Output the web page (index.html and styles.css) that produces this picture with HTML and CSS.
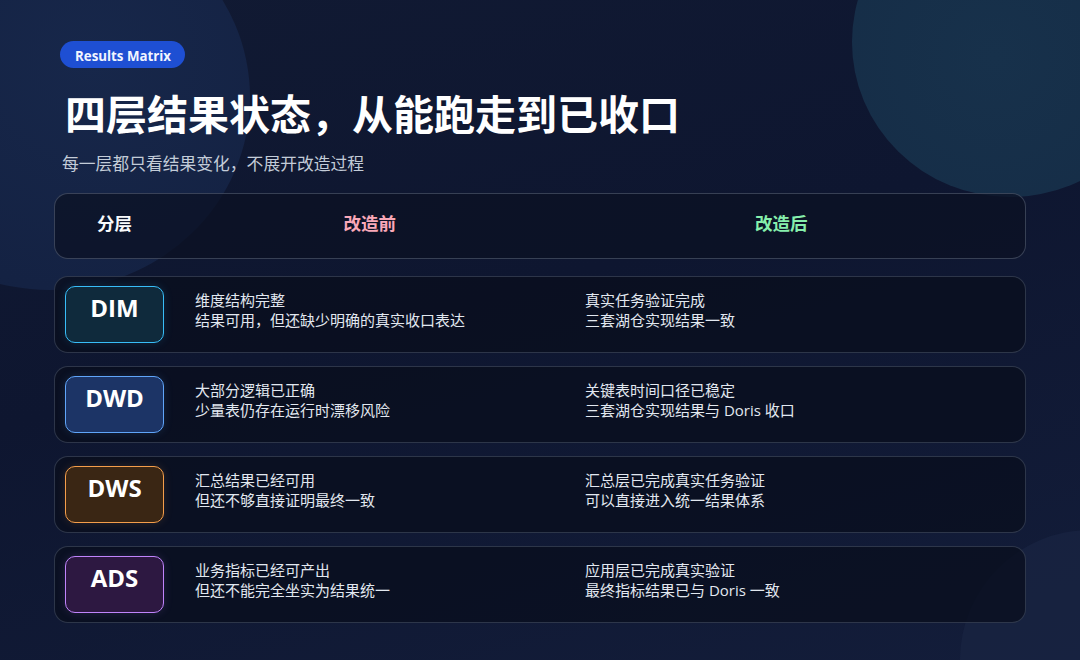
FILE: index.html
```html
<!DOCTYPE html>
<html lang="zh-CN">
<head>
<meta charset="utf-8">
<link rel="stylesheet" href="styles.css">
</head>
<body>
<div class="slide">
  <div class="blob blob-left"></div>
  <div class="blob blob-right"></div>
  <div class="blob blob-bottom"></div>
  <div class="content">
    <div class="pill">Results Matrix</div>
    <h1 class="title">四层结果状态，从能跑走到已收口</h1>
    <p class="subtitle">每一层都只看结果变化，不展开改造过程</p>

    <div class="head-row">
      <div class="h-layer">分层</div>
      <div class="h-before">改造前</div>
      <div class="h-after">改造后</div>
    </div>

    <div class="rows">
      <div class="row">
        <div class="badge badge-dim">DIM</div>
        <div class="cell">维度结构完整<br>结果可用，但还缺少明确的真实收口表达</div>
        <div class="cell">真实任务验证完成<br>三套湖仓实现结果一致</div>
      </div>
      <div class="row">
        <div class="badge badge-dwd">DWD</div>
        <div class="cell">大部分逻辑已正确<br>少量表仍存在运行时漂移风险</div>
        <div class="cell">关键表时间口径已稳定<br>三套湖仓实现结果与 Doris 收口</div>
      </div>
      <div class="row">
        <div class="badge badge-dws">DWS</div>
        <div class="cell">汇总结果已经可用<br>但还不够直接证明最终一致</div>
        <div class="cell">汇总层已完成真实任务验证<br>可以直接进入统一结果体系</div>
      </div>
      <div class="row">
        <div class="badge badge-ads">ADS</div>
        <div class="cell">业务指标已经可产出<br>但还不能完全坐实为结果统一</div>
        <div class="cell">应用层已完成真实验证<br>最终指标结果已与 Doris 一致</div>
      </div>
    </div>
  </div>
</div>
</body>
</html>
```

FILE: styles.css
```css
* { box-sizing: border-box; }
html, body { margin: 0; padding: 0; }
body {
  width: 1080px;
  height: 660px;
  overflow: hidden;
  font-family: "Open Sans", "Noto Sans CJK SC", sans-serif;
  background: #0f172d;
}
.slide {
  position: relative;
  width: 1080px;
  height: 660px;
  overflow: hidden;
  background: linear-gradient(165deg, #111a33 0%, #0e1630 45%, #131d3a 100%);
}
.blob {
  position: absolute;
  border-radius: 50%;
}
.blob-left {
  left: -150px;
  top: -95px;
  width: 400px;
  height: 385px;
  background: radial-gradient(circle at 60% 40%, #17274a 0%, #142243 70%, #132040 100%);
}
.blob-right {
  left: 852px;
  top: -113px;
  width: 316px;
  height: 310px;
  background: radial-gradient(circle at 45% 55%, #17314b 0%, #152c46 100%);
}
.blob-bottom {
  left: 960px;
  top: 530px;
  width: 260px;
  height: 260px;
  background: #1a2745;
  opacity: 0.6;
}
.content {
  position: relative;
  padding: 41px 54px 0 54px;
}
.pill {
  display: inline-block;
  margin-left: 6px;
  height: 27px;
  line-height: 27px;
  padding: 2px 14px 0 15px;
  border-radius: 14px;
  background: #1e4fd3;
  color: #f1f5ff;
  font-size: 13.3px;
  font-weight: 700;
}
.title {
  margin: 16px 0 0 11px;
  font-family: "Noto Sans CJK SC", sans-serif;
  font-size: 41px;
  line-height: 56px;
  font-weight: 700;
  color: #ffffff;
  letter-spacing: 0;
}
.subtitle {
  margin: 12px 0 0 8px;
  font-family: "Noto Sans CJK SC", sans-serif;
  font-size: 16.8px;
  line-height: 22px;
  color: #c3ccd8;
}
.head-row {
  margin-top: 19px;
  height: 66px;
  border: 1px solid rgba(148, 163, 184, 0.32);
  border-radius: 14px;
  background: rgba(11, 17, 34, 0.72);
  display: grid;
  grid-template-columns: 99px 1fr 1fr;
  padding: 0 38px 7px 10px;
  column-gap: 0;
  align-items: center;
  font-family: "Noto Sans CJK SC", sans-serif;
  font-size: 17.5px;
  font-weight: 700;
  text-align: center;
}
.h-layer { color: #f8fafc; }
.h-before { color: #f9a8b8; }
.h-after { color: #86efac; }
.rows {
  margin-top: 17px;
  display: flex;
  flex-direction: column;
  gap: 13px;
}
.row {
  height: 77px;
  border: 1px solid rgba(148, 163, 184, 0.26);
  border-radius: 14px;
  background: rgba(9, 14, 30, 0.78);
  display: grid;
  grid-template-columns: 99px 359px 1fr;
  column-gap: 31px;
  align-items: center;
  padding: 0 10px;
}
.badge {
  height: 57px;
  border-radius: 10px;
  border: 1.5px solid;
  display: flex;
  align-items: center;
  justify-content: center;
  padding-bottom: 14px;
  font-size: 24px;
  font-weight: 700;
  color: #ffffff;
}
.badge-dim { border-color: #38bdf8; background: #0f2a3c; box-shadow: 0 0 10px rgba(56,189,248,0.15); }
.badge-dwd { border-color: #60a5fa; background: #1c3466; box-shadow: 0 0 10px rgba(96,165,250,0.15); }
.badge-dws { border-color: #f59e4b; background: #3a2614; box-shadow: 0 0 10px rgba(245,158,75,0.15); }
.badge-ads { border-color: #c084fc; background: #2d1841; box-shadow: 0 0 10px rgba(192,132,252,0.15); }
.cell {
  font-family: "Open Sans", "Noto Sans CJK SC", sans-serif;
  font-size: 15px;
  line-height: 20px;
  color: #e2e8f0;
  padding-bottom: 9px;
}
```
